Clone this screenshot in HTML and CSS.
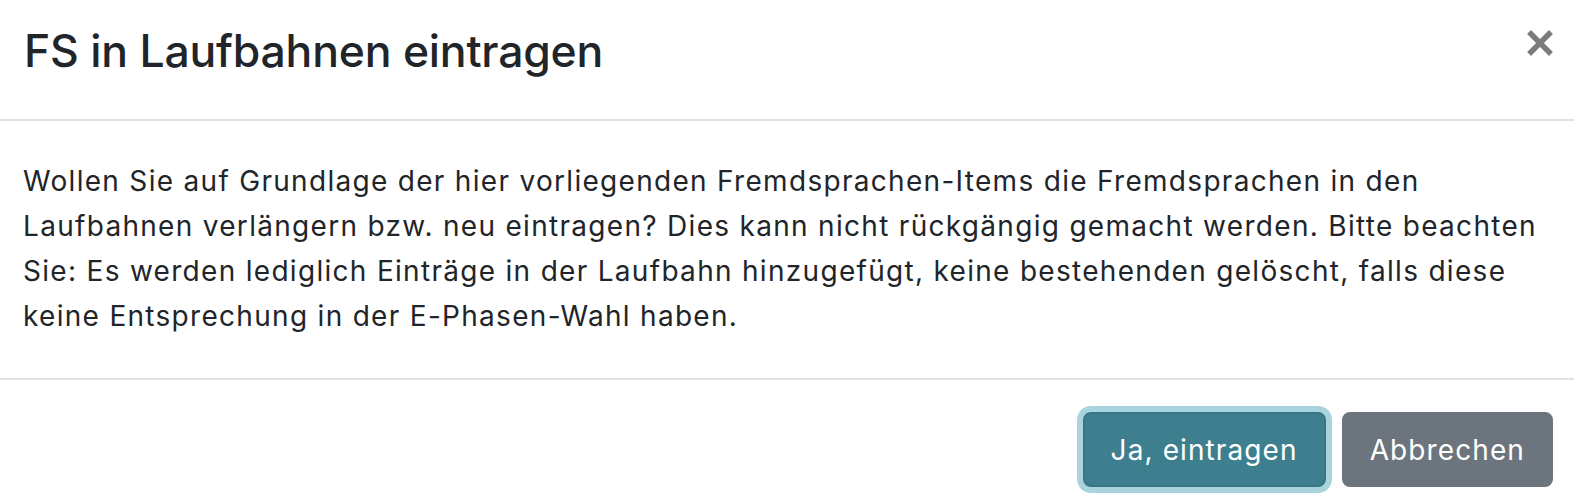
FILE: index.html
```html
<!DOCTYPE html>
<html lang="de">
<head>
<meta charset="utf-8">
<title>FS in Laufbahnen eintragen</title>
<link rel="stylesheet" href="styles.css">
</head>
<body>
<div class="modal">
  <div class="modal-header">
    <h4 class="modal-title">FS in Laufbahnen eintragen</h4>
    <button class="close" type="button" aria-label="Close">
      <svg width="26" height="26" viewBox="0 0 26 26"><path d="M4 4 L22 22 M22 4 L4 22" stroke="currentColor" stroke-width="5.5" stroke-linecap="square" fill="none"/></svg>
    </button>
  </div>
  <div class="modal-body">
    <p>Wollen Sie auf Grundlage der hier vorliegenden Fremdsprachen-Items die Fremdsprachen in den Laufbahnen verlängern bzw. neu eintragen? Dies kann nicht rückgängig gemacht werden. Bitte beachten Sie: Es werden lediglich Einträge in der Laufbahn hinzugefügt, keine bestehenden gelöscht, falls diese keine Entsprechung in der E-Phasen-Wahl haben.</p>
  </div>
  <div class="modal-footer">
    <button class="btn btn-primary" type="button">Ja, eintragen</button>
    <button class="btn btn-secondary" type="button">Abbrechen</button>
  </div>
</div>
</body>
</html>
```

FILE: styles.css
```css
* { box-sizing: border-box; }
html, body {
  margin: 0;
  padding: 0;
  background: #fff;
}
body {
  font-family: Inter, "Noto Sans", sans-serif;
  color: #212529;
}
.modal {
  display: flex;
  flex-direction: column;
  width: 1574px;
  height: 504px;
  overflow: hidden;
}
.modal-header {
  display: flex;
  justify-content: space-between;
  align-items: flex-start;
  height: 121px;
  padding: 23px 24px 0 24px;
  border-bottom: 2px solid #dee2e6;
}
.modal-title {
  margin: 0;
  font-size: 44.5px;
  font-weight: 500;
  line-height: 56px;
  letter-spacing: -0.2px;
}
.close {
  margin: 7px -3px 0 0;
  padding: 0;
  border: 0;
  background: none;
  color: #7b7b7b;
  width: 26px;
  height: 26px;
  display: flex;
}
.modal-body {
  padding: 38px 23px 0 23px;
  height: 259px;
  border-bottom: 2px solid #dee2e6;
}
.modal-body p {
  margin: 0;
  font-size: 28px;
  line-height: 45px;
  letter-spacing: 1.3px;
}
.modal-footer {
  display: flex;
  justify-content: flex-end;
  align-items: flex-start;
  gap: 16px;
  padding: 32px 21px 0 0;
}
.btn {
  height: 75px;
  padding: 0 26px;
  border-radius: 8px;
  font-family: Inter, "Noto Sans", sans-serif;
  font-size: 28px;
  letter-spacing: 1.1px;
  color: #fff;
  border: 2px solid transparent;
}
.btn-primary {
  background: #3e7f8f;
  border-color: #387685;
  box-shadow: 0 0 0 6px #a9d4de;
}
.btn-secondary {
  background: #6c757d;
  border-color: #6c757d;
}
```
